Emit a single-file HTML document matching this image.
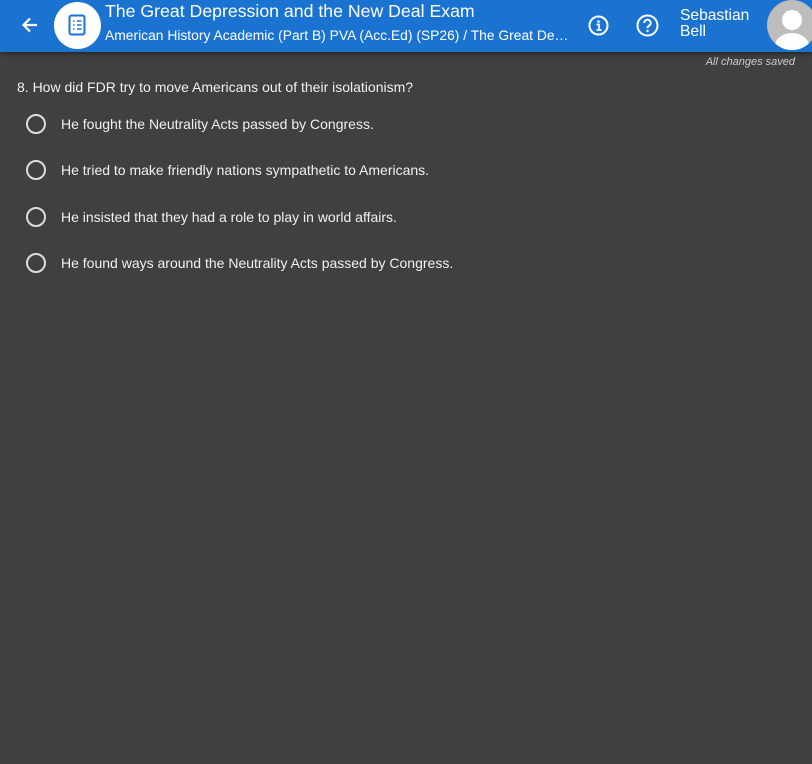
<!DOCTYPE html>
<html><head><meta charset="utf-8"><style>
*{margin:0;padding:0;box-sizing:border-box}
body{width:812px;height:764px;background:#404040;font-family:"Liberation Sans",sans-serif;overflow:hidden;position:relative;color:#eee}
.hdr{position:absolute;left:0;top:0;width:812px;height:52px;background:#1a73d0;box-shadow:0 2px 4px rgba(0,0,0,.4)}
.t1{position:absolute;left:105px;top:1px;font-size:17.7px;color:#fff;white-space:nowrap}
.t2{position:absolute;left:105px;top:27px;font-size:13.85px;color:#fff;white-space:nowrap}
.name{position:absolute;left:680px;top:8px;font-size:15.6px;line-height:16px;color:#fff}
.av{position:absolute;left:767px;top:0;width:50px;height:50px;border-radius:50%;background:#bdbdbd;overflow:hidden}
.saved{position:absolute;right:17px;top:56px;font-size:11px;font-style:italic;color:#ccc}
.q{position:absolute;left:17px;top:79px;font-size:14px;color:#f0f0f0}
.opt{position:absolute;left:26px;font-size:14px;color:#f0f0f0}
.opt i{position:absolute;left:0;top:-2px;width:20px;height:20px;border:2px solid #ddd;border-radius:50%}
.opt span{position:absolute;left:35px;top:0;white-space:nowrap}
</style></head><body>
<div class="hdr">
<svg style="position:absolute;left:20px;top:15px" width="20" height="20" viewBox="0 0 20 20"><path d="M17 10H4M10 3.5L3.5 10 10 16.5" stroke="#fff" stroke-width="2.2" fill="none"/></svg>
<div style="position:absolute;left:54px;top:2px;width:47px;height:47px;border-radius:50%;background:#fff"></div>
<svg style="position:absolute;left:68px;top:14px" width="18" height="22" viewBox="0 0 18 22"><rect x="1.5" y="1.5" width="15" height="19" rx="2" stroke="#1a73d0" stroke-width="2" fill="none"/><path d="M5 7h1.5M9 7h4.5M5 11h1.5M9 11h4.5M5 15h1.5M9 15h4.5" stroke="#1a73d0" stroke-width="1.6"/></svg>
<div class="t1">The Great Depression and the New Deal Exam</div>
<div class="t2">American History Academic (Part B) PVA (Acc.Ed) (SP26) / The Great De…</div>
<svg style="position:absolute;left:588px;top:15px" width="21" height="21" viewBox="0 0 21 21"><circle cx="10.5" cy="10.5" r="9" stroke="#fff" stroke-width="2" fill="none"/><circle cx="10.5" cy="6.5" r="1.3" fill="#fff"/><path d="M8.5 9.5h2.5v5M8.5 15h5" stroke="#fff" stroke-width="1.7" fill="none"/></svg>
<svg style="position:absolute;left:636px;top:14px" width="23" height="23" viewBox="0 0 23 23"><circle cx="11.5" cy="11.5" r="10" stroke="#fff" stroke-width="2" fill="none"/><path d="M8.3 9a3.2 3.2 0 1 1 4.6 2.8c-1 .6-1.4 1.2-1.4 2.5" stroke="#fff" stroke-width="2" fill="none"/><circle cx="11.5" cy="17" r="1.2" fill="#fff"/></svg>
<div class="name">Sebastian<br>Bell</div>
<div class="av"><svg width="50" height="50" viewBox="0 0 50 50"><circle cx="25" cy="20" r="10" fill="#fff"/><ellipse cx="25" cy="46" rx="17" ry="13" fill="#fff"/></svg></div>
</div>
<div class="saved">All changes saved</div>
<div class="q">8. How did FDR try to move Americans out of their isolationism?</div>
<div class="opt" style="top:116px"><i></i><span>He fought the Neutrality Acts passed by Congress.</span></div>
<div class="opt" style="top:162px"><i></i><span>He tried to make friendly nations sympathetic to Americans.</span></div>
<div class="opt" style="top:209px"><i></i><span>He insisted that they had a role to play in world affairs.</span></div>
<div class="opt" style="top:255px"><i></i><span>He found ways around the Neutrality Acts passed by Congress.</span></div>
</body></html>
